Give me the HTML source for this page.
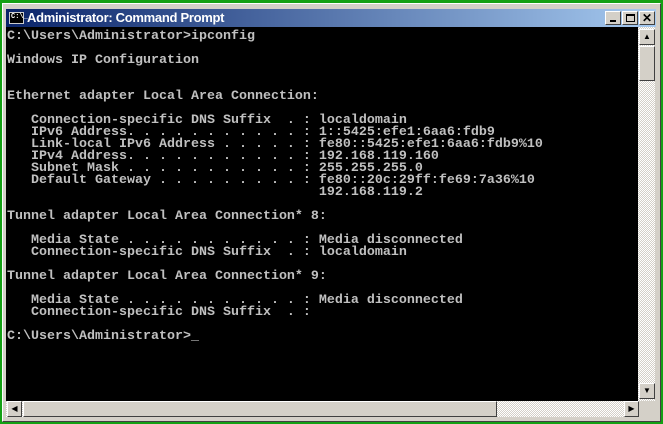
<!DOCTYPE html>
<html><head><style>
*{margin:0;padding:0;box-sizing:border-box}
body{width:663px;height:424px;background:#14a014;position:relative;overflow:hidden;font-family:"Liberation Sans",sans-serif}
.win{position:absolute;left:2px;top:3px;width:659px;height:419px;background:#d4d0c8;border-top:1px solid #fff;border-left:1px solid #fff;border-right:1px solid #404040;border-bottom:1px solid #404040}
.title{position:absolute;background:linear-gradient(90deg,#0a246a,#a6caf0)}
.title span{position:absolute;left:21px;top:1px;color:#fff;font-weight:bold;font-size:13px;letter-spacing:-0.3px}
.icon{position:absolute;left:3px;top:3px;width:15px;height:12px;background:#000;border:1px solid #ccc;color:#fff;font:bold 7px "Liberation Mono",monospace;line-height:9px;padding-left:1px}
.btn{position:absolute;top:2px;width:16px;height:14px;background:#d4d0c8;border-top:1px solid #fff;border-left:1px solid #fff;border-right:1px solid #404040;border-bottom:1px solid #404040}
.con{position:absolute;left:6px;top:27px;width:632px;height:374px;background:#000;overflow:hidden}
pre{position:absolute;left:1px;top:4px;color:#c0c0c0;font:13.33px/12px "Liberation Mono",monospace;font-weight:bold}
.vs{position:absolute;left:638px;top:27px;width:17px;height:374px;background:repeating-conic-gradient(#fff 0 25%,#d4d0c8 0 50%) 0 0/2px 2px}
.hs{position:absolute;left:6px;top:401px;width:632px;height:16px;background:repeating-conic-gradient(#fff 0 25%,#d4d0c8 0 50%) 0 0/2px 2px}
.b3{position:absolute;background:#d4d0c8;border-top:1px solid #fff;border-left:1px solid #fff;border-right:1px solid #404040;border-bottom:1px solid #404040}
</style></head><body>
<div class="win"></div>
<div class="title" style="left:6px;top:9px;width:650px;height:18px">
<div class="icon">C:\_</div><span>Administrator: Command Prompt</span>
<div class="btn" style="left:599px"><div style="position:absolute;left:4px;top:8px;width:6px;height:2px;background:#000"></div></div>
<div class="btn" style="left:616px"><div style="position:absolute;left:3px;top:2px;width:9px;height:8px;border:1px solid #000;border-top-width:2px"></div></div>
<div class="btn" style="left:633px;font:bold 12px/12px 'Liberation Sans';text-align:center">✕</div>
</div>
<div class="con"><pre>C:\Users\Administrator&gt;ipconfig

Windows IP Configuration


Ethernet adapter Local Area Connection:

   Connection-specific DNS Suffix  . : localdomain
   IPv6 Address. . . . . . . . . . . : 1::5425:efe1:6aa6:fdb9
   Link-local IPv6 Address . . . . . : fe80::5425:efe1:6aa6:fdb9%10
   IPv4 Address. . . . . . . . . . . : 192.168.119.160
   Subnet Mask . . . . . . . . . . . : 255.255.255.0
   Default Gateway . . . . . . . . . : fe80::20c:29ff:fe69:7a36%10
                                       192.168.119.2

Tunnel adapter Local Area Connection* 8:

   Media State . . . . . . . . . . . : Media disconnected
   Connection-specific DNS Suffix  . : localdomain

Tunnel adapter Local Area Connection* 9:

   Media State . . . . . . . . . . . : Media disconnected
   Connection-specific DNS Suffix  . :

C:\Users\Administrator&gt;_</pre></div>
<div class="vs"></div>
<div class="b3" style="left:639px;top:29px;width:16px;height:16px;font-size:8px;text-align:center;line-height:14px">▲</div>
<div class="b3" style="left:639px;top:46px;width:16px;height:35px"></div>
<div class="b3" style="left:639px;top:383px;width:16px;height:16px;font-size:8px;text-align:center;line-height:14px">▼</div>
<div class="hs"></div>
<div class="b3" style="left:7px;top:401px;width:15px;height:16px;font-size:8px;text-align:center;line-height:14px">◀</div>
<div class="b3" style="left:23px;top:401px;width:474px;height:16px"></div>
<div class="b3" style="left:624px;top:401px;width:15px;height:16px;font-size:8px;text-align:center;line-height:14px">▶</div>
</body></html>
